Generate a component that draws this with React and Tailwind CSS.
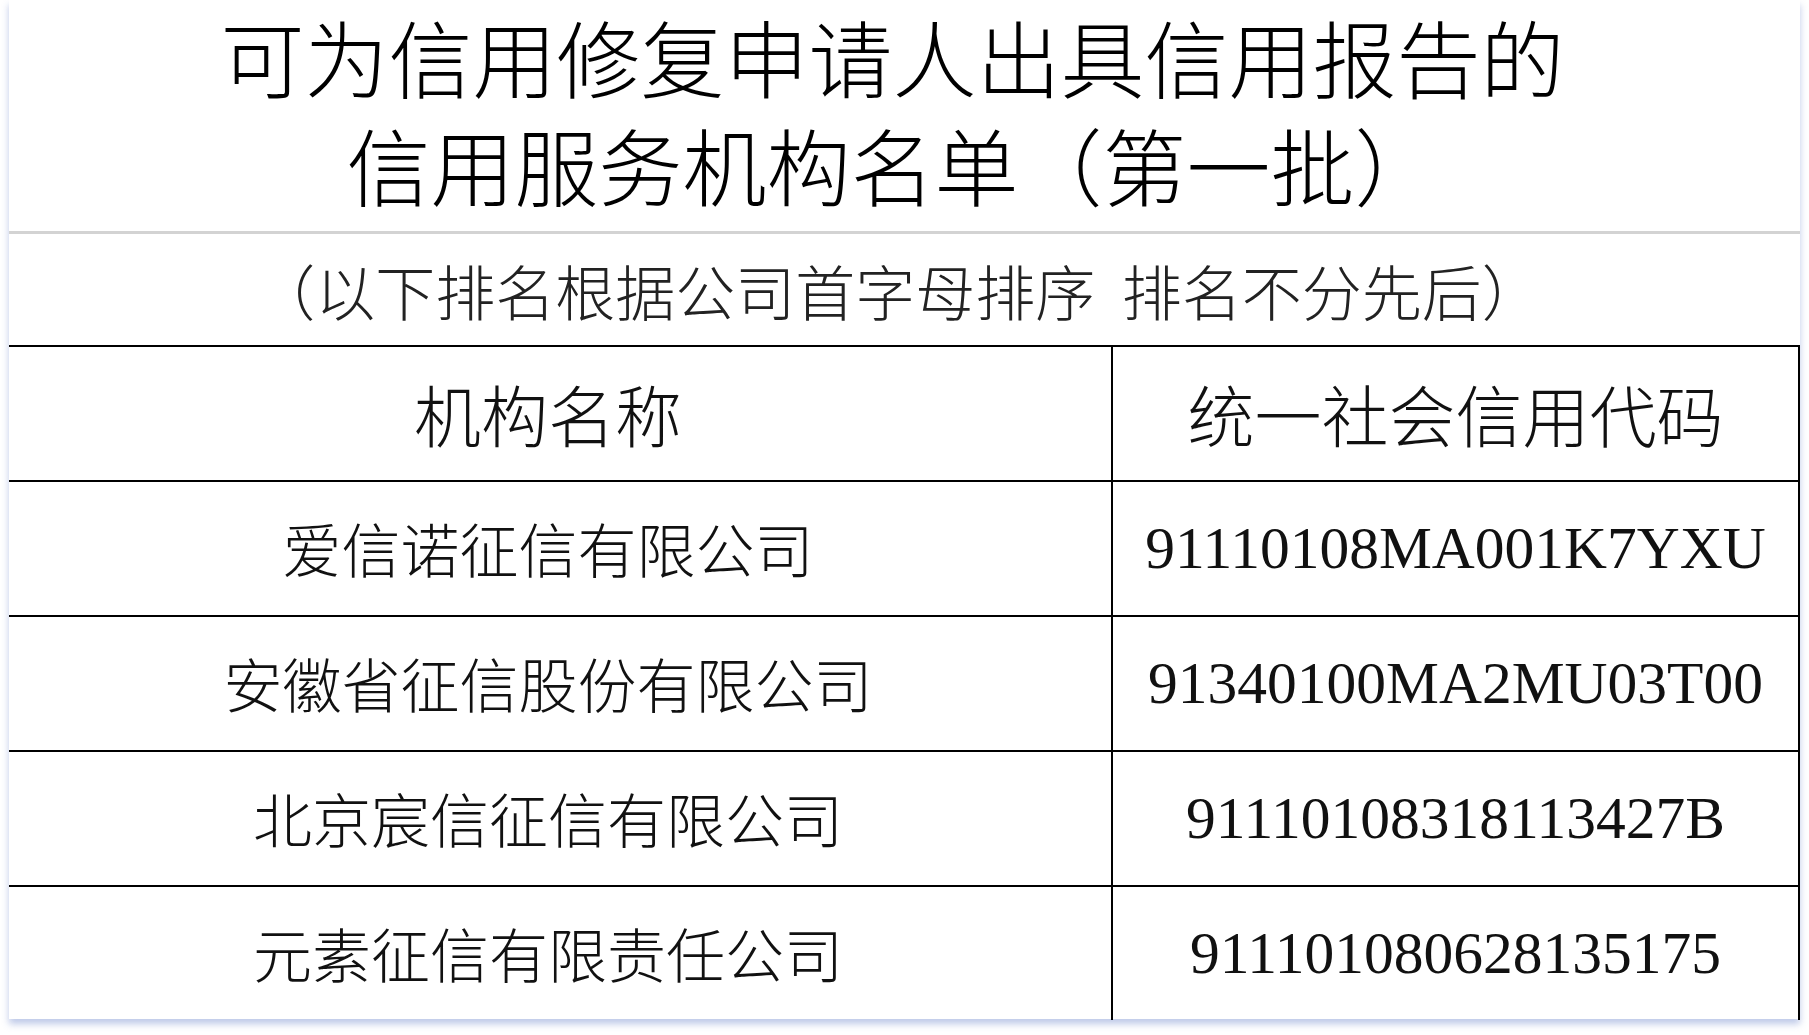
const cjk = '"Noto Sans CJK SC", "Noto Sans", sans-serif'
const serif = '"Liberation Serif", "Times New Roman", serif'

const rows = [
    { name: '爱信诺征信有限公司', code: '91110108MA001K7YXU' },
    { name: '安徽省征信股份有限公司', code: '91340100MA2MU03T00' },
    { name: '北京宸信征信有限公司', code: '91110108318113427B' },
    { name: '元素征信有限责任公司', code: '911101080628135175' },
]

const Row = ({ left, right, header }) => (
    <div className="flex h-[135px] border-t-2 border-r-2 border-black">
        <div
            className={`flex w-[1102px] items-center justify-center pr-[24px] text-[#111] font-light ${header ? 'text-[67px]' : 'text-[59px]'}`}
            style={{ fontFamily: cjk }}
        >
            {left}
        </div>
        <div className="w-[2px] bg-black" />
        <div
            className={`flex flex-1 items-center justify-center text-[#111] ${header ? 'text-[67px] font-light' : 'text-[59.5px]'}`}
            style={{ fontFamily: header ? cjk : serif }}
        >
            {right}
        </div>
    </div>
)

export default function App() {
    return (
        <div className="min-h-screen bg-white px-[9px]">
            <div className="h-[1019px] w-[1791px] bg-white shadow-[0_5px_7px_rgba(70,100,190,0.35)]">
                <div
                    className="flex h-[231px] flex-col items-center pt-[2px] pr-[24px] text-[84px] leading-[108px] font-light text-black"
                    style={{ fontFamily: cjk }}
                >
                    <div>可为信用修复申请人出具信用报告的</div>
                    <div>信用服务机构名单（第一批）</div>
                </div>
                <div className="h-[3px] bg-[#d3d3d3]" />
                <div
                    className="flex h-[111px] items-center justify-center pr-[12px] text-[60px] font-light text-[#222]"
                    style={{ fontFamily: cjk }}
                >
                    {'（以下排名根据公司首字母排序\u00a0\u00a0排名不分先后）'}
                </div>
                <Row header left="机构名称" right="统一社会信用代码" />
                {rows.map((r) => (
                    <Row key={r.code} left={r.name} right={r.code} />
                ))}
            </div>
        </div>
    )
}
